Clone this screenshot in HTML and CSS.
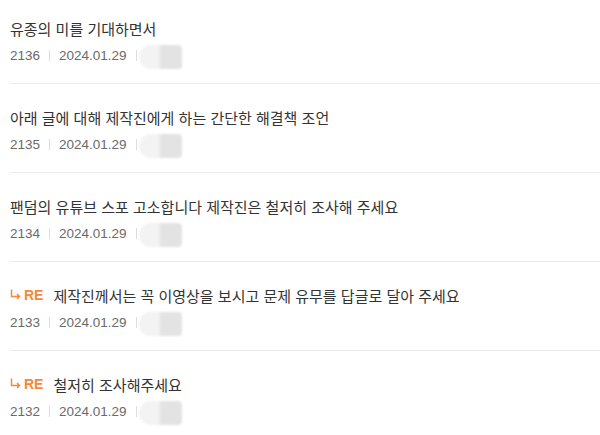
FILE: index.html
```html
<!DOCTYPE html>
<html lang="ko">
<head>
<meta charset="utf-8">
<link rel="stylesheet" href="styles.css">
</head>
<body>
<ul class="list">
  <li class="row">
    <div class="title"><span class="text">유종의 미를 기대하면서</span></div>
    <div class="meta"><span class="num">2136</span><span class="sep"></span><span class="date">2024.01.29</span><span class="sep sep-last"></span><span class="blur"></span></div>
  </li>
  <li class="row">
    <div class="title"><span class="text">아래 글에 대해 제작진에게 하는 간단한 해결책 조언</span></div>
    <div class="meta"><span class="num">2135</span><span class="sep"></span><span class="date">2024.01.29</span><span class="sep sep-last"></span><span class="blur"></span></div>
  </li>
  <li class="row">
    <div class="title"><span class="text">팬덤의 유튜브 스포 고소합니다 제작진은 철저히 조사해 주세요</span></div>
    <div class="meta"><span class="num">2134</span><span class="sep"></span><span class="date">2024.01.29</span><span class="sep sep-last"></span><span class="blur"></span></div>
  </li>
  <li class="row">
    <div class="title"><span class="re"><svg class="arrow" width="11" height="11" viewBox="0 0 11 11"><path d="M1.5 0.5V7.5H9.5M7 5L9.5 7.5L7 10" fill="none" stroke="#f5883a" stroke-width="1.5"/></svg>RE</span><span class="text">제작진께서는 꼭 이영상을 보시고 문제 유무를 답글로 달아 주세요</span></div>
    <div class="meta"><span class="num">2133</span><span class="sep"></span><span class="date">2024.01.29</span><span class="sep sep-last"></span><span class="blur"></span></div>
  </li>
  <li class="row">
    <div class="title"><span class="re"><svg class="arrow" width="11" height="11" viewBox="0 0 11 11"><path d="M1.5 0.5V7.5H9.5M7 5L9.5 7.5L7 10" fill="none" stroke="#f5883a" stroke-width="1.5"/></svg>RE</span><span class="text">철저히 조사해주세요</span></div>
    <div class="meta"><span class="num">2132</span><span class="sep"></span><span class="date">2024.01.29</span><span class="sep sep-last"></span><span class="blur"></span></div>
  </li>
</ul>
</body>
</html>
```
FILE: styles.css
```css
html, body {
  margin: 0;
  padding: 0;
  background: #fff;
}
body {
  font-family: "Noto Sans CJK KR", "Noto Sans", sans-serif;
  overflow: hidden;
}
.list {
  list-style: none;
  margin: 0;
  padding: 0 0 0 10px;
}
.row {
  padding: 23px 0 18px;
  border-bottom: 1px solid #ececec;
}
.row:first-child {
  padding-top: 18px;
}
.title {
  display: flex;
  align-items: center;
  height: 20px;
  font-size: 15px;
  color: #333;
}
.re {
  display: flex;
  align-items: center;
  gap: 3px;
  color: #f5883a;
  font-family: "Liberation Sans", Arial, sans-serif;
  font-weight: bold;
  font-size: 14px;
  margin-right: 10px;
}
.arrow {
  display: block;
  margin-top: -2px;
}
.meta {
  display: flex;
  align-items: center;
  height: 20px;
  margin-top: 7px;
  font-family: "Liberation Sans", Arial, sans-serif;
  font-size: 13.5px;
  color: #6a6a6a;
}
.sep {
  width: 1px;
  height: 11px;
  background: #ddd;
  margin: 0 9px;
}
.sep-last {
  margin-right: 2px;
}
.blur {
  width: 43px;
  height: 24px;
  margin-top: 3px;
  border-radius: 12px 4px 4px 12px;
  background: linear-gradient(to right, #f3f3f3 0%, #f3f3f3 46%, #e3e3e3 51%, #e3e3e3 100%);
  filter: blur(1.2px);
}
```
